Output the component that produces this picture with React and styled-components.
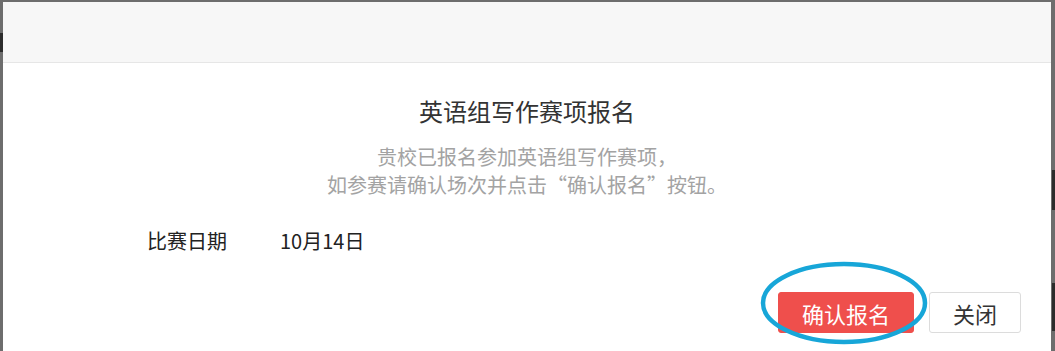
import React from 'react';
import styled, { createGlobalStyle } from 'styled-components';

const GlobalStyle = createGlobalStyle`
  html, body {
    margin: 0;
    padding: 0;
  }
  body {
    font-family: "Noto Sans CJK SC", "Noto Sans", sans-serif;
  }
`;

// fond gris derrière la modale
const Backdrop = styled.div`
  position: relative;
  width: 1055px;
  height: 351px;
  box-sizing: border-box;
  padding: 2px 4px 0 3px;
  background: #6d6d6d;
  overflow: hidden;
  display: flex;
`;

const PeekMark = styled.span`
  position: absolute;
  left: ${(p) => p.left}px;
  top: ${(p) => p.top}px;
  width: 3px;
  height: ${(p) => p.h}px;
  background: #2c2c2c;
`;

const Dialog = styled.div`
  flex: 1;
  background: #fff;
  display: flex;
  flex-direction: column;
`;

const Header = styled.div`
  height: 60px;
  flex-shrink: 0;
  background: #f7f7f7;
  border-bottom: 1px solid #e6e6e6;
`;

const Body = styled.div`
  padding-top: 32px;
  display: flex;
  flex-direction: column;
`;

const Title = styled.h3`
  margin: 0;
  text-align: center;
  font-size: 24px;
  line-height: 32px;
  font-weight: 400;
  color: #333;
`;

const Notice = styled.p`
  margin: 16px 0 0;
  text-align: center;
  font-size: 20px;
  line-height: 28px;
  color: #a3a3a3;
`;

const InfoRow = styled.div`
  margin-top: 28px;
  padding-left: 144px;
  display: flex;
  align-items: center;
  font-size: 20px;
  line-height: 28px;
  color: #222;
`;

const InfoLabel = styled.span`
  width: 133px;
  flex-shrink: 0;
`;

const Actions = styled.div`
  margin-top: 37px;
  padding-right: 30px;
  display: flex;
  justify-content: flex-end;
  gap: 15px;
`;

const Button = styled.button`
  height: 41px;
  padding: 0 23px;
  font-family: inherit;
  font-size: 22px;
  line-height: 1;
  border-radius: 3px;
  cursor: pointer;
  border: 1px solid ${(p) => (p.primary ? '#ef4f4c' : '#dcdcdc')};
  background: ${(p) => (p.primary ? '#ef4f4c' : '#fff')};
  color: ${(p) => (p.primary ? '#fff' : '#333')};
`;

const Circle = styled.svg`
  position: absolute;
  left: 757px;
  top: 259px;
  pointer-events: none;
`;

export default function App() {
  return (
    <>
      <GlobalStyle />
      <Backdrop>
        <PeekMark left={0} top={33} h={19} />
        <PeekMark left={1052} top={170} h={40} />
        <PeekMark left={1052} top={283} h={48} />
        <Dialog>
          <Header />
          <Body>
            <Title>英语组写作赛项报名</Title>
            <Notice>
              贵校已报名参加英语组写作赛项，
              <br />
              如参赛请确认场次并点击“确认报名”按钮。
            </Notice>
            <InfoRow>
              <InfoLabel>比赛日期</InfoLabel>
              <span>10月14日</span>
            </InfoRow>
            <Actions>
              <Button primary>确认报名</Button>
              <Button>关闭</Button>
            </Actions>
          </Body>
        </Dialog>
        <Circle width="176" height="90" viewBox="0 0 176 90">
          <ellipse cx="87" cy="44" rx="81" ry="39" fill="none" stroke="#17a6d8" strokeWidth="4.5" />
        </Circle>
      </Backdrop>
    </>
  );
}
